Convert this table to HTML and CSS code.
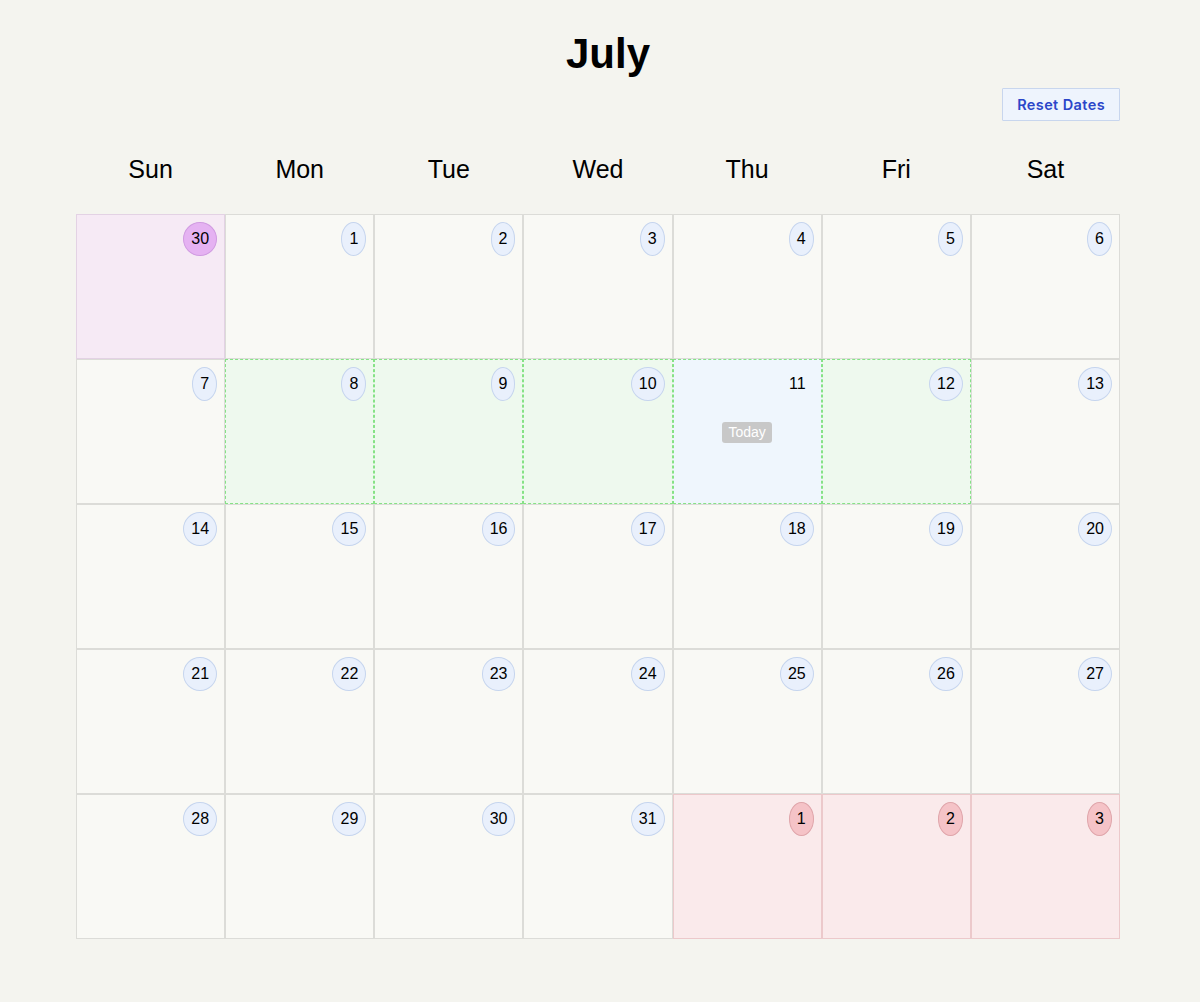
FILE: index.html
```html
<!DOCTYPE html>
<html>
<head>
<meta charset="utf-8">
<link rel="stylesheet" href="styles.css">
</head>
<body>
<div class="page">
  <h1 class="title">July</h1>
  <div class="actions"><button class="reset">Reset Dates</button></div>
  <div class="weekdays">
    <div>Sun</div><div>Mon</div><div>Tue</div><div>Wed</div><div>Thu</div><div>Fri</div><div>Sat</div>
  </div>
  <div class="grid">
    <div class="cell prev"><span class="num">30</span></div>
    <div class="cell"><span class="num">1</span></div>
    <div class="cell"><span class="num">2</span></div>
    <div class="cell"><span class="num">3</span></div>
    <div class="cell"><span class="num">4</span></div>
    <div class="cell"><span class="num">5</span></div>
    <div class="cell"><span class="num">6</span></div>

    <div class="cell"><span class="num">7</span></div>
    <div class="cell sel"><span class="num">8</span></div>
    <div class="cell sel"><span class="num">9</span></div>
    <div class="cell sel"><span class="num">10</span></div>
    <div class="cell sel today"><span class="num">11</span><span class="badge">Today</span></div>
    <div class="cell sel"><span class="num">12</span></div>
    <div class="cell"><span class="num">13</span></div>

    <div class="cell"><span class="num">14</span></div>
    <div class="cell"><span class="num">15</span></div>
    <div class="cell"><span class="num">16</span></div>
    <div class="cell"><span class="num">17</span></div>
    <div class="cell"><span class="num">18</span></div>
    <div class="cell"><span class="num">19</span></div>
    <div class="cell"><span class="num">20</span></div>

    <div class="cell"><span class="num">21</span></div>
    <div class="cell"><span class="num">22</span></div>
    <div class="cell"><span class="num">23</span></div>
    <div class="cell"><span class="num">24</span></div>
    <div class="cell"><span class="num">25</span></div>
    <div class="cell"><span class="num">26</span></div>
    <div class="cell"><span class="num">27</span></div>

    <div class="cell"><span class="num">28</span></div>
    <div class="cell"><span class="num">29</span></div>
    <div class="cell"><span class="num">30</span></div>
    <div class="cell"><span class="num">31</span></div>
    <div class="cell next"><span class="num">1</span></div>
    <div class="cell next"><span class="num">2</span></div>
    <div class="cell next"><span class="num">3</span></div>
  </div>
</div>
</body>
</html>
```

FILE: styles.css
```css
html, body {
  margin: 0;
  padding: 0;
  background: #f4f4ef;
  font-family: "Liberation Sans", Arial, sans-serif;
  color: #000;
}

.page {
  width: 1044px;
  margin: 0 0 0 76px;
  padding-top: 30px;
}

.title {
  margin: 0;
  font-size: 42px;
  line-height: 48px;
  font-weight: bold;
  text-align: center;
  padding-left: 20px;
}

.actions {
  display: flex;
  justify-content: flex-end;
  margin-top: 10px;
}

.reset {
  font-family: Inter, "Liberation Sans", sans-serif;
  font-size: 14.5px;
  font-weight: 600;
  letter-spacing: 0.4px;
  color: #2b46c9;
  background: #eef4fd;
  border: 1px solid #c8d6ee;
  height: 33px;
  padding: 0 14px;
  border-radius: 1px;
}

.weekdays {
  display: grid;
  grid-template-columns: repeat(7, 1fr);
  height: 50px;
  margin-top: 23px;
  margin-bottom: 20px;
}

.weekdays div {
  display: flex;
  align-items: center;
  justify-content: center;
  font-size: 25px;
}

.grid {
  display: grid;
  grid-template-columns: repeat(7, 1fr);
  grid-auto-rows: 145px;
}

.cell {
  box-sizing: border-box;
  border: 1px solid #dcdcd8;
  background: #f9f9f5;
  padding: 7px 7px;
  display: flex;
  flex-direction: column;
  align-items: flex-end;
}

.num {
  display: block;
  font-size: 16px;
  line-height: 18px;
  padding: 7px 7px;
  border-radius: 50%;
  background: #e9f0fc;
  border: 1px solid #c6d5ee;
}

.prev {
  background: #f6eaf5;
  border-color: #e3d2e4;
}

.prev .num {
  background: #e5b2f2;
  border-color: #d09be1;
}

.sel {
  background: #eef9ee;
  border: 1px dashed #86e286;
}

.today {
  background: #eff6fd;
}

.today .num {
  background: transparent;
  border-color: transparent;
}

.badge {
  align-self: center;
  margin-top: 21px;
  background: #c8c8c8;
  color: #fff;
  font-size: 14px;
  line-height: 21px;
  padding: 0 6px;
  border-radius: 3px;
}

.next {
  background: #faeaeb;
  border-color: #ecc9cb;
}

.next .num {
  background: #f5c3c7;
  border-color: #dfa5aa;
}
```
